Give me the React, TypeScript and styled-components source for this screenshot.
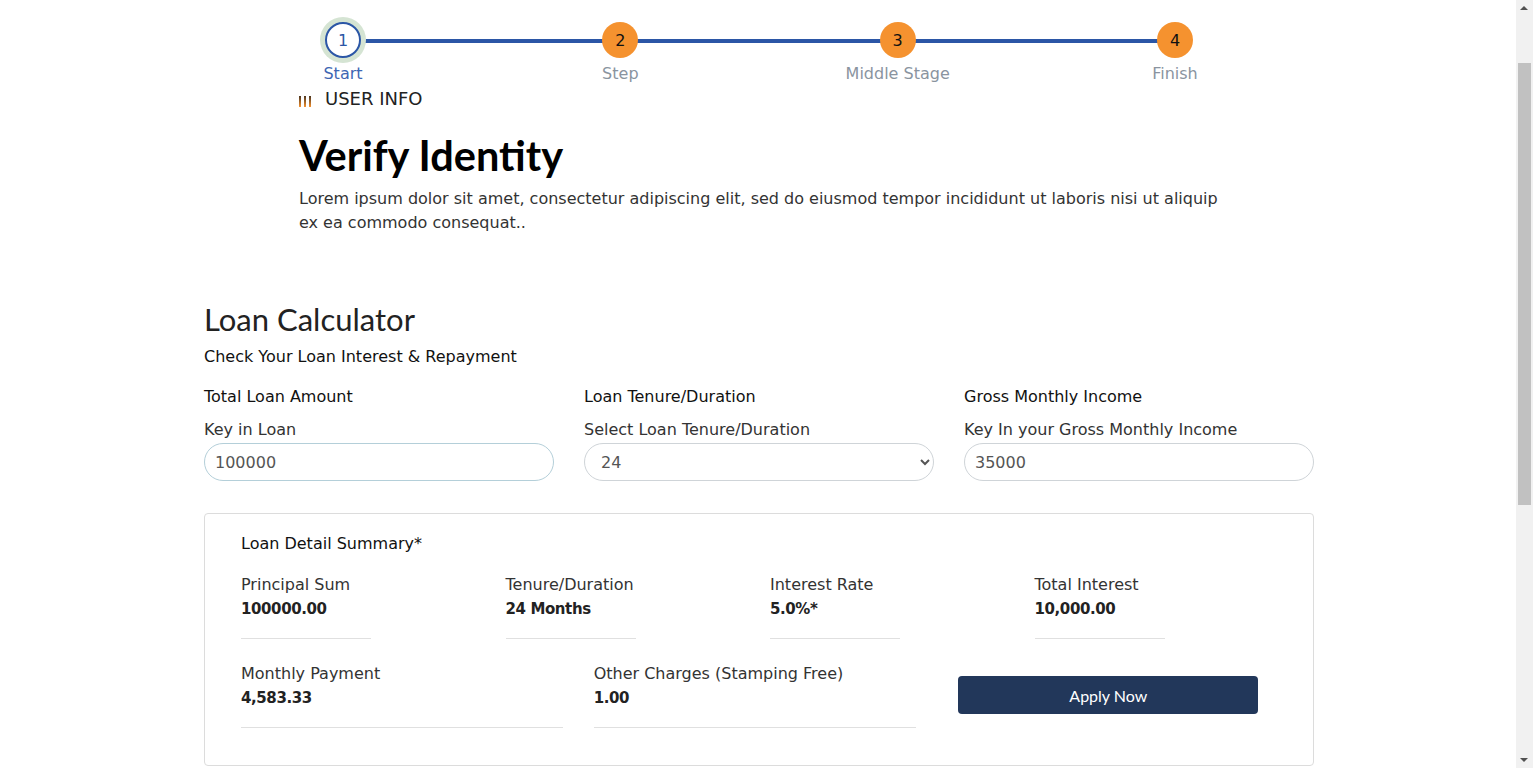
import styled, { createGlobalStyle, css } from "styled-components";

const BODY_FONT = `"DejaVu Sans", "Noto Sans", sans-serif`;
const HEAD_FONT = `Lato, "Open Sans", sans-serif`;

const GlobalStyle = createGlobalStyle`
  * {
    box-sizing: border-box;
  }
  body {
    margin: 0 15px 0 0;
    background: #fff;
    color: #212529;
    font-family: ${BODY_FONT};
    font-size: 16px;
  }
`;

const Page = styled.div`
  padding-top: 22px;
  padding-bottom: 40px;
`;

// the browser scrollbar seen on the right of the page
const ScrollTrack = styled.div`
  position: fixed;
  top: 0;
  right: 0;
  width: 17px;
  height: 100vh;
  background: #f1f1f1;

  &::before,
  &::after {
    content: "";
    position: absolute;
    left: 4px;
    border-left: 4px solid transparent;
    border-right: 4px solid transparent;
  }
  &::before {
    top: 6px;
    border-bottom: 4px solid #505050;
  }
  &::after {
    bottom: 6px;
    border-top: 4px solid #505050;
  }
`;

const ScrollThumb = styled.div`
  position: absolute;
  top: 63px;
  left: 2px;
  width: 13px;
  height: 442px;
  background: #c1c1c1;
`;

const Container = styled.div`
  width: 1140px;
  margin: 0 auto;
  padding: 0 15px;
`;

const Intro = styled.div`
  margin: 0 95px;
`;

const Stepper = styled.div`
  position: relative;
  display: flex;
  justify-content: space-between;

  &::before {
    content: "";
    position: absolute;
    top: 17px;
    left: 44px;
    right: 44px;
    height: 4px;
    background: #2b56a6;
  }
`;

const Step = styled.div`
  width: 88px;
  display: flex;
  flex-direction: column;
  align-items: center;
`;

const Circle = styled.div<{ $active?: boolean }>`
  position: relative;
  z-index: 1;
  width: 36px;
  height: 36px;
  border-radius: 50%;
  display: flex;
  align-items: center;
  justify-content: center;
  font-size: 16px;
  background: #f5922f;
  color: #111;

  ${(p) =>
    p.$active &&
    css`
      background: #fff;
      border: 2px solid #2b56a6;
      color: #2b56a6;
      box-shadow: 0 0 0 5px #d5e4d3;
    `}
`;

const StepLabel = styled.div<{ $active?: boolean }>`
  margin-top: 6px;
  line-height: 20px;
  font-size: 16px;
  white-space: nowrap;
  color: ${(p) => (p.$active ? "#3e66b3" : "#8a949f")};
`;

const SectionTag = styled.div`
  margin-top: 4px;
  display: flex;
  align-items: center;
  gap: 14px;
  font-size: 18px;
  line-height: 22px;
  color: #222;
  text-transform: uppercase;
`;

const Bars = styled.span`
  display: inline-flex;
  gap: 3px;
  margin-top: 4px;

  & > i {
    display: block;
    width: 2px;
    height: 11px;
    background: linear-gradient(#4a3420, #f5922f);
  }
`;

const Title = styled.h1`
  margin: 21px 0 0;
  font-family: ${HEAD_FONT};
  font-weight: 700;
  font-size: 41.5px;
  line-height: 48px;
  color: #000;
`;

const Lead = styled.p`
  margin: 8px 0 0;
  font-size: 16px;
  line-height: 24px;
  color: #333;
`;

const CalcTitle = styled.h2`
  margin: 65px 0 0;
  font-family: ${HEAD_FONT};
  font-weight: 400;
  font-size: 31px;
  line-height: 38px;
  color: #222;
`;

const SubTitle = styled.div`
  margin-top: 7px;
  font-size: 16px;
  line-height: 24px;
  color: #111;
`;

const FieldGrid = styled.div`
  margin-top: 16px;
  display: grid;
  grid-template-columns: repeat(3, 350px);
  gap: 30px;
`;

const Field = styled.div`
  display: flex;
  flex-direction: column;
`;

const FieldTitle = styled.div`
  font-size: 16px;
  line-height: 24px;
  color: #111;
`;

const FieldHint = styled.label`
  margin-top: 9px;
  font-size: 16px;
  line-height: 24px;
  color: #333;
`;

const controlStyle = css<{ $focus?: boolean }>`
  margin-top: 1px;
  width: 100%;
  height: 38px;
  border-radius: 19px;
  border: 1px solid ${(p) => (p.$focus ? "#b4cfd9" : "#cfd4d8")};
  padding: 0 10px;
  font-family: ${BODY_FONT};
  font-size: 16px;
  color: #555;
  background: #fff;
  outline: none;
`;

const TextInput = styled.input<{ $focus?: boolean }>`
  ${controlStyle}
`;

const Select = styled.select<{ $focus?: boolean }>`
  ${controlStyle}
  padding-left: 12px;
`;

const Card = styled.div`
  margin-top: 32px;
  border: 1px solid #dcdcdc;
  border-radius: 4px;
  padding: 18px 14px 37px 36px;
`;

const CardTitle = styled.div`
  font-size: 16px;
  line-height: 24px;
  color: #111;
`;

const SummaryRow = styled.div<{ $cols: number; $top: number }>`
  margin-top: ${(p) => p.$top}px;
  display: grid;
  grid-template-columns: repeat(${(p) => p.$cols}, 1fr);
`;

const Item = styled.div`
  display: flex;
  flex-direction: column;
`;

const ItemLabel = styled.div`
  font-size: 16px;
  line-height: 24px;
  color: #333;
`;

const ItemValue = styled.div`
  font-size: 15px;
  line-height: 24px;
  font-weight: 600;
  letter-spacing: -0.4px;
  color: #222;
`;

const Divider = styled.div<{ $w: number }>`
  margin-top: 17px;
  width: ${(p) => p.$w}px;
  height: 1px;
  background: #e0e0e0;
`;

const ApplyButton = styled.button`
  align-self: center;
  margin: 0 0 0 12px;
  width: 300px;
  height: 38px;
  border: none;
  border-radius: 4px;
  background: #22375a;
  color: #fff;
  font-family: ${HEAD_FONT};
  font-size: 16px;
  cursor: pointer;
`;

const steps = [
  { n: 1, label: "Start" },
  { n: 2, label: "Step" },
  { n: 3, label: "Middle Stage" },
  { n: 4, label: "Finish" },
];

const firstRow = [
  { label: "Principal Sum", value: "100000.00" },
  { label: "Tenure/Duration", value: "24 Months" },
  { label: "Interest Rate", value: "5.0%*" },
  { label: "Total Interest", value: "10,000.00" },
];

const secondRow = [
  { label: "Monthly Payment", value: "4,583.33" },
  { label: "Other Charges (Stamping Free)", value: "1.00" },
];

export default function App() {
  return (
    <>
      <GlobalStyle />
      <Page>
        <Container>
          <Intro>
            <Stepper>
              {steps.map((s) => (
                <Step key={s.n}>
                  <Circle $active={s.n === 1}>{s.n}</Circle>
                  <StepLabel $active={s.n === 1}>{s.label}</StepLabel>
                </Step>
              ))}
            </Stepper>
            <SectionTag>
              <Bars>
                <i />
                <i />
                <i />
              </Bars>
              User Info
            </SectionTag>
            <Title>Verify Identity</Title>
            <Lead>
              Lorem ipsum dolor sit amet, consectetur adipiscing elit, sed do
              eiusmod tempor incididunt ut laboris nisi ut aliquip ex ea commodo
              consequat..
            </Lead>
          </Intro>

          <CalcTitle>Loan Calculator</CalcTitle>
          <SubTitle>Check Your Loan Interest &amp; Repayment</SubTitle>

          <FieldGrid>
            <Field>
              <FieldTitle>Total Loan Amount</FieldTitle>
              <FieldHint htmlFor="loan">Key in Loan</FieldHint>
              <TextInput id="loan" $focus defaultValue="100000" />
            </Field>
            <Field>
              <FieldTitle>Loan Tenure/Duration</FieldTitle>
              <FieldHint htmlFor="tenure">Select Loan Tenure/Duration</FieldHint>
              <Select id="tenure" defaultValue="24">
                <option value="12">12</option>
                <option value="24">24</option>
                <option value="36">36</option>
                <option value="48">48</option>
              </Select>
            </Field>
            <Field>
              <FieldTitle>Gross Monthly Income</FieldTitle>
              <FieldHint htmlFor="income">Key In your Gross Monthly Income</FieldHint>
              <TextInput id="income" defaultValue="35000" />
            </Field>
          </FieldGrid>

          <Card>
            <CardTitle>Loan Detail Summary*</CardTitle>
            <SummaryRow $cols={4} $top={17}>
              {firstRow.map((it) => (
                <Item key={it.label}>
                  <ItemLabel>{it.label}</ItemLabel>
                  <ItemValue>{it.value}</ItemValue>
                  <Divider $w={130} />
                </Item>
              ))}
            </SummaryRow>
            <SummaryRow $cols={3} $top={23}>
              {secondRow.map((it) => (
                <Item key={it.label}>
                  <ItemLabel>{it.label}</ItemLabel>
                  <ItemValue>{it.value}</ItemValue>
                  <Divider $w={322} />
                </Item>
              ))}
              <ApplyButton type="button">Apply Now</ApplyButton>
            </SummaryRow>
          </Card>
        </Container>
      </Page>
      <ScrollTrack>
        <ScrollThumb />
      </ScrollTrack>
    </>
  );
}
